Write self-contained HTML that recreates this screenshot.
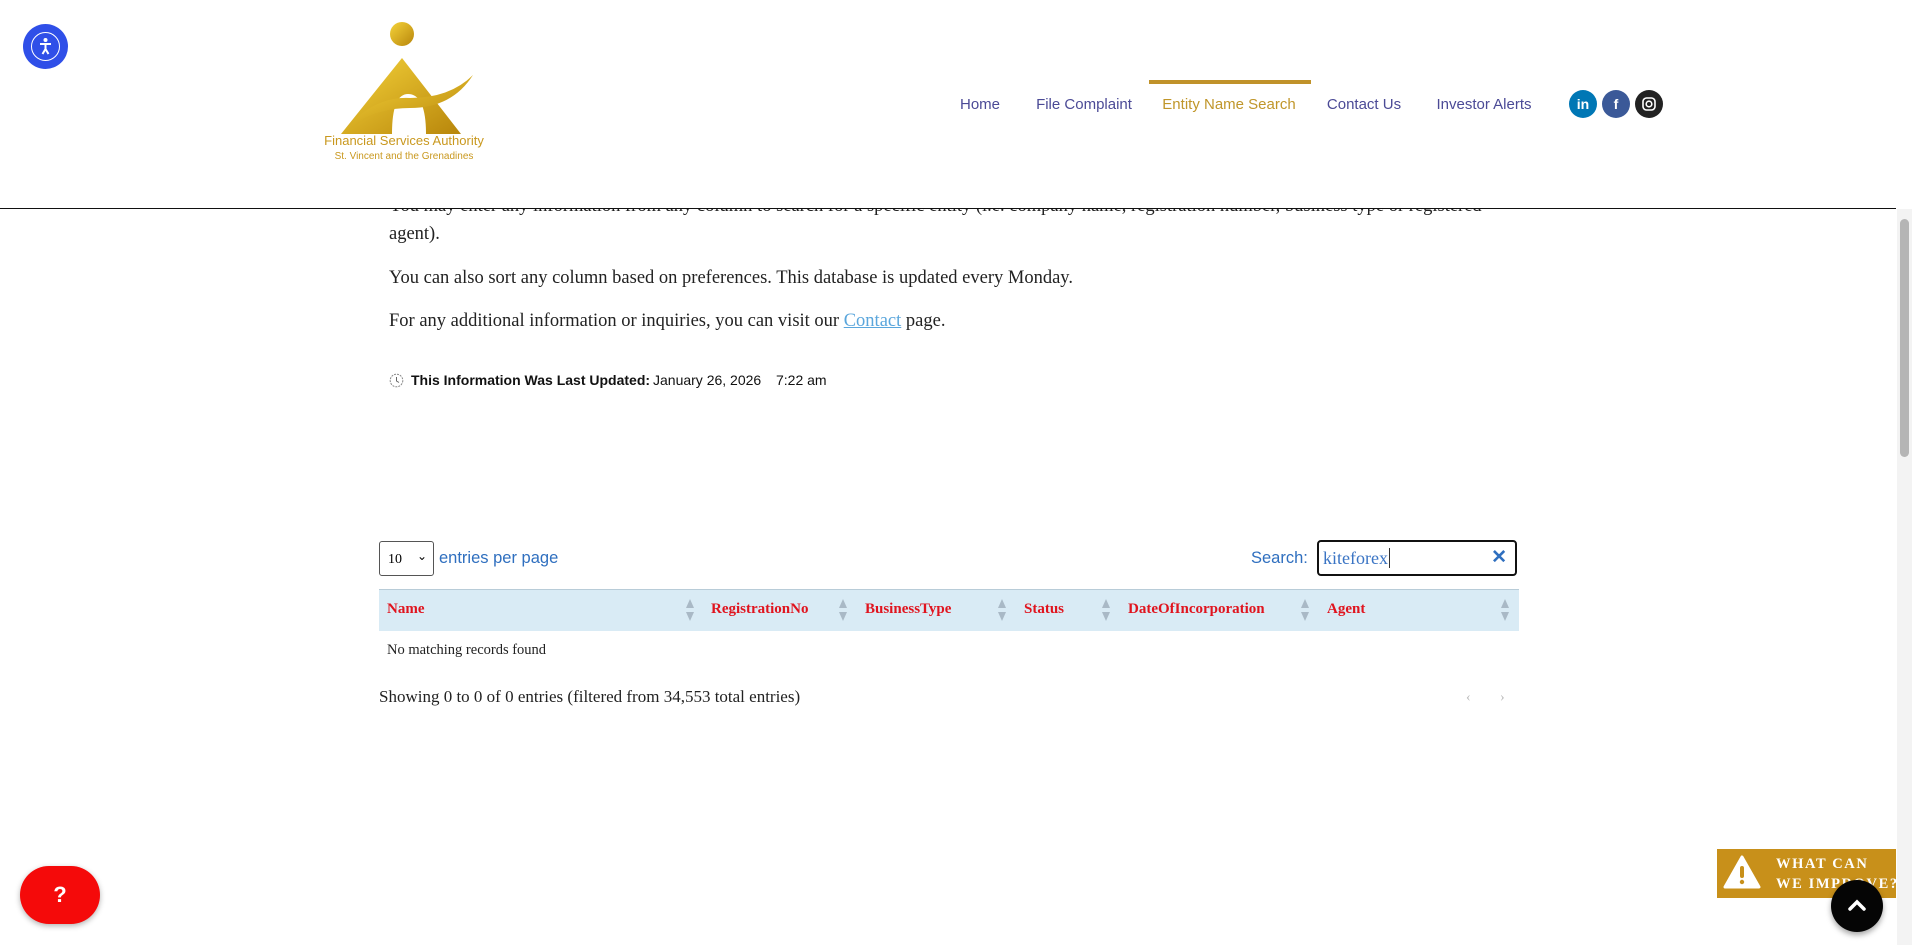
<!DOCTYPE html>
<html><head><meta charset="utf-8">
<style>
*{margin:0;padding:0;box-sizing:border-box}
html,body{width:1912px;height:945px;overflow:hidden;background:#fff;position:relative;font-family:"Liberation Serif",serif}
.abs{position:absolute}
header{position:absolute;left:0;top:0;width:1896px;height:209px;background:#fff;border-bottom:1.5px solid #111;z-index:5}
.nav{position:absolute;top:96px;font-family:"Liberation Sans",sans-serif;font-size:15px;color:#4b4a96;white-space:nowrap;transform:translateX(-50%)}
.soc{position:absolute;top:90px;width:28px;height:28px;border-radius:50%;color:#fff;font-family:"Liberation Sans",sans-serif;font-weight:bold;font-size:14px;text-align:center;line-height:28px}
p.t{position:absolute;left:389px;font-size:18.5px;color:#222;white-space:nowrap}
.th{position:absolute;top:601px;font-size:15px;font-weight:bold;color:#e0141e;white-space:nowrap}
.ar{position:absolute;top:598px;width:10px;height:24px}
</style></head><body>
<header>
  <div class="abs" style="left:23px;top:24px;width:45px;height:45px;border-radius:50%;background:#2f4fe8">
    <div class="abs" style="left:8px;top:8px;width:29px;height:29px;border:1.5px solid #fff;border-radius:50%"></div>
    <svg class="abs" style="left:14px;top:13px" width="17" height="19" viewBox="0 0 17 19"><circle cx="8.5" cy="3" r="2" fill="#fff"/><path d="M3 7h11M8.5 7v5M8.5 12l-3 5M8.5 12l3 5" stroke="#fff" stroke-width="2" fill="none"/></svg>
  </div>
  <svg class="abs" style="left:0;top:0" width="520" height="170" viewBox="0 0 520 170">
    <defs><linearGradient id="g" x1="0" y1="0" x2="1" y2="1"><stop offset="0" stop-color="#f5d33a"/><stop offset="1" stop-color="#b8860b"/></linearGradient></defs>
    <ellipse cx="402" cy="34" rx="12" ry="12" fill="url(#g)"/>
    <path d="M402 58 L461 134 L426 134 Q426 94 408 94 Q392 94 392 134 L341 134 Z" fill="url(#g)"/>
    <path d="M346 128 Q375 96 410 98 Q450 98 473 75 Q452 108 410 108 Q375 108 346 128Z" fill="url(#g)"/>
  </svg>
  <div class="abs" style="left:304px;top:134px;width:200px;text-align:center;font-family:'Liberation Sans',sans-serif;font-size:13px;color:#c9981e;line-height:14px">Financial Services Authority<br><span style="font-size:10px">St. Vincent and the Grenadines</span></div>
  <div class="abs" style="left:1149px;top:80px;width:162px;height:4px;background:#c0922a"></div>
  <div class="nav" style="left:980px">Home</div>
  <div class="nav" style="left:1084px">File Complaint</div>
  <div class="nav" style="left:1229px;color:#c0962a">Entity Name Search</div>
  <div class="nav" style="left:1364px">Contact Us</div>
  <div class="nav" style="left:1484px">Investor Alerts</div>
  <div class="soc" style="left:1569px;background:#0077b5">in</div>
  <div class="soc" style="left:1602px;background:#3b5998">f</div>
  <div class="soc" style="left:1635px;background:#222"><svg width="14" height="14" viewBox="0 0 14 14" style="margin-top:7px"><rect x="1" y="1" width="12" height="12" rx="3.5" stroke="#fff" stroke-width="1.6" fill="none"/><circle cx="7" cy="7" r="2.8" stroke="#fff" stroke-width="1.6" fill="none"/></svg></div>
</header>
<p class="t" style="top:196px">You may enter any information from any column to search for a specific entity (i.e. company name, registration number, business type or registered</p>
<p class="t" style="top:224px">agent).</p>
<p class="t" style="top:268px">You can also sort any column based on preferences. This database is updated every Monday.</p>
<p class="t" style="top:311px">For any additional information or inquiries, you can visit our <span style="color:#5aa6dc;text-decoration:underline">Contact</span> page.</p>
<svg class="abs" style="left:389px;top:373px" width="15" height="15" viewBox="0 0 15 15"><circle cx="7.5" cy="7.5" r="6.3" stroke="#888" fill="none" stroke-dasharray="2 1"/><path d="M7.5 4v4l2.5 1.5" stroke="#666" fill="none"/></svg>
<div class="abs" style="left:411px;top:372px;font-family:'Liberation Sans',sans-serif;font-size:14px;color:#111;white-space:nowrap"><b>This Information Was Last Updated:</b><span style="position:absolute;left:242px">January 26, 2026</span><span style="position:absolute;left:365px">7:22 am</span></div>

<div class="abs" style="left:379px;top:541px;width:55px;height:35px;border:1px solid #555;border-radius:3px;font-size:14px;padding:10px 0 0 8px">10<span style="position:absolute;right:6px;top:7px;font-family:'Liberation Sans',sans-serif;font-size:12px">&#8964;</span></div>
<div class="abs" style="left:439px;top:549px;font-family:'Liberation Sans',sans-serif;font-size:16.5px;color:#2f6fbf">entries per page</div>
<div class="abs" style="left:1251px;top:549px;font-family:'Liberation Sans',sans-serif;font-size:16.5px;color:#2f6fbf">Search:</div>
<div class="abs" style="left:1317px;top:540px;width:200px;height:36px;border:2px solid #111;border-radius:4px;font-size:18px;color:#3a74c4;padding:6px 0 0 4px">kiteforex<span style="border-left:1px solid #333;margin-left:1px"></span><span style="position:absolute;right:8px;top:4px;font-family:'Liberation Sans',sans-serif;font-weight:bold;color:#2f6fbf;font-size:19px">✕</span></div>

<div class="abs" style="left:379px;top:589px;width:1140px;height:42px;background:#d9ebf5;border-top:1px solid #b8ccd8"></div>
<div class="th" style="left:387px">Name</div>
<div class="th" style="left:711px">RegistrationNo</div>
<div class="th" style="left:865px">BusinessType</div>
<div class="th" style="left:1024px">Status</div>
<div class="th" style="left:1128px">DateOfIncorporation</div>
<div class="th" style="left:1327px">Agent</div>
<svg width="0" height="0" style="position:absolute"><defs><g id="a"><path d="M5 1L9 10H1Z M5 23L9 14H1Z" fill="#a9b9c6"/></g></defs></svg>
<svg class="ar" style="left:685px"><use href="#a"/></svg>
<svg class="ar" style="left:838px"><use href="#a"/></svg>
<svg class="ar" style="left:997px"><use href="#a"/></svg>
<svg class="ar" style="left:1101px"><use href="#a"/></svg>
<svg class="ar" style="left:1300px"><use href="#a"/></svg>
<svg class="ar" style="left:1500px"><use href="#a"/></svg>
<div class="abs" style="left:387px;top:642px;font-size:14.5px;color:#222">No matching records found</div>
<div class="abs" style="left:379px;top:687px;font-size:17px;color:#222;white-space:nowrap">Showing 0 to 0 of 0 entries (filtered from 34,553 total entries)</div>
<div class="abs" style="left:1466px;top:690px;font-size:14px;color:#bbb">‹</div>
<div class="abs" style="left:1500px;top:690px;font-size:14px;color:#bbb">›</div>

<div class="abs" style="left:1897px;top:209px;width:15px;height:736px;background:#f3f3f3"></div>
<div class="abs" style="left:1900px;top:219px;width:9px;height:238px;background:#b5b5b5;border-radius:5px"></div>

<div class="abs" style="left:20px;top:866px;width:80px;height:58px;border-radius:29px;background:#f50a0a;color:#fff;font-family:'Liberation Sans',sans-serif;font-weight:bold;font-size:22px;text-align:center;line-height:58px;box-shadow:0 2px 6px rgba(0,0,0,.3)">?</div>
<div class="abs" style="left:1717px;top:849px;width:179px;height:49px;background:#c8901a;overflow:hidden">
  <svg class="abs" style="left:6px;top:6px" width="38" height="34" viewBox="0 0 38 34"><path d="M19 2L36 32H2Z" fill="#fff" stroke="#fff" stroke-linejoin="round" stroke-width="3"/><rect x="17" y="11" width="4" height="12" rx="2" fill="#c8901a"/><circle cx="19" cy="27" r="2.2" fill="#c8901a"/></svg>
  <div class="abs" style="left:59px;top:5px;color:#fff;font-weight:bold;font-size:14.5px;letter-spacing:1.6px;line-height:20px;white-space:nowrap">WHAT CAN<br>WE IMPROVE?</div>
</div>
<div class="abs" style="left:1831px;top:880px;width:52px;height:52px;border-radius:50%;background:#050505;box-shadow:0 3px 6px rgba(0,0,0,.35)">
  <svg class="abs" style="left:16px;top:18px" width="20" height="14" viewBox="0 0 20 14"><path d="M3 11L10 4L17 11" stroke="#fff" stroke-width="3.5" fill="none" stroke-linecap="round"/></svg>
</div>
</body></html>
